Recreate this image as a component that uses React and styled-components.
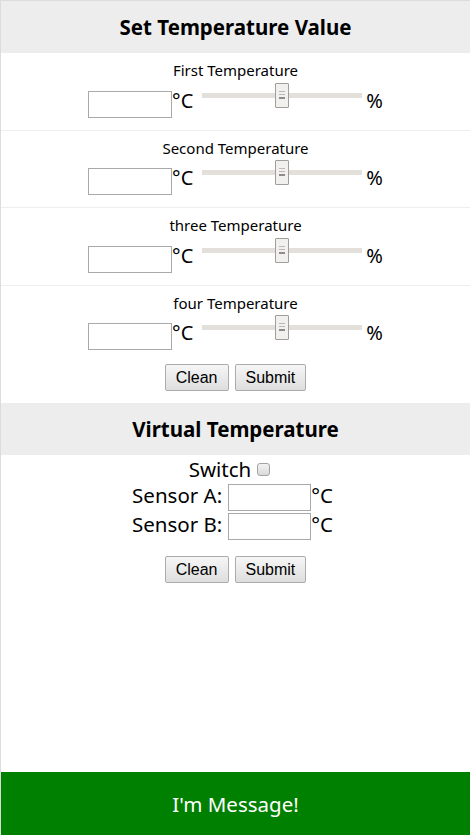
import React from 'react';
import styled, { createGlobalStyle } from 'styled-components';

const GlobalStyle = createGlobalStyle`
  html, body { margin: 0; padding: 0; background: #fff; }
  body { font-family: "Noto Sans", "Open Sans", sans-serif; color: #000; }
  *, *::before, *::after { box-sizing: border-box; }
`;

const Page = styled.div`
  min-height: 100vh;
  display: flex;
  flex-direction: column;
  border-left: 1px solid #dcdcdc;
  border-top: 1px solid #dcdcdc;
`;

const SectionHeader = styled.h2`
  margin: 0;
  height: 52px;
  display: flex;
  align-items: center;
  justify-content: center;
  background: #ededed;
  font-size: 20.5px;
  font-weight: 700;
`;

const TempRow = styled.div`
  display: flex;
  flex-direction: column;
  align-items: center;
  padding: 7px 0 12px;
  border-bottom: ${(p) => (p.$last ? 'none' : '1px solid #eeeeee')};
`;

const RowLabel = styled.div`
  font-size: 15px;
  line-height: 21.5px;
`;

const Controls = styled.div`
  display: flex;
  align-items: flex-start;
  height: 36px;
`;

const TextBox = styled.input`
  width: ${(p) => p.$w || 84}px;
  height: 27px;
  margin: ${(p) => p.$mt || 0}px 0 0;
  padding: 2px 3px;
  border: 1px solid #a9a9a9;
  border-radius: 0;
  background: #fff;
  font: 13px "Noto Sans", sans-serif;
  outline: none;
`;

const Unit = styled.span`
  font-size: 20px;
  line-height: 24px;
  margin-top: 7px;
  margin-left: ${(p) => p.$ml || 0}px;
`;

const Slider = styled.input`
  -webkit-appearance: none;
  appearance: none;
  width: 160px;
  height: 25px;
  margin: 1px 0 0 9px;
  padding: 0;
  background: transparent;

  &::-webkit-slider-runnable-track {
    height: 5px;
    background: #e3dfda;
    border: none;
  }
  &::-webkit-slider-thumb {
    -webkit-appearance: none;
    box-sizing: border-box;
    width: 14px;
    height: 25px;
    margin-top: -10px;
    border: 1px solid #a19d99;
    border-radius: 1px;
    background:
      linear-gradient(#bcb8b4, #bcb8b4) 3px 7px / 6px 1px no-repeat,
      linear-gradient(#bcb8b4, #bcb8b4) 3px 10px / 6px 1px no-repeat,
      linear-gradient(#8f8b87, #8f8b87) 3px 13px / 6px 2px no-repeat,
      #f1f0ee;
  }
`;

const ButtonBar = styled.div`
  display: flex;
  justify-content: center;
  gap: 6px;
  margin-top: ${(p) => p.$mt}px;
  padding-bottom: ${(p) => p.$pb || 0}px;
`;

const Button = styled.button`
  height: 27px;
  padding: 0 10px;
  border: 1px solid #acacac;
  border-radius: 2px;
  background: linear-gradient(#f6f6f6, #dedede);
  color: #000;
  font: 16px "Liberation Sans", Arial, sans-serif;
`;

const VirtualForm = styled.div`
  display: flex;
  flex-direction: column;
  align-items: center;
`;

const FormLine = styled.div`
  display: flex;
  align-items: center;
  justify-content: center;
  height: ${(p) => p.$h}px;
`;

const LineText = styled.span`
  font-size: 20.5px;
  line-height: 27px;
  margin-bottom: ${(p) => p.$mb || 0}px;
  margin-right: ${(p) => p.$mr || 0}px;
`;

const Check = styled.input`
  -webkit-appearance: none;
  appearance: none;
  width: 13px;
  height: 13px;
  margin: 0 12px 0 0;
  border: 1px solid #a3a3a3;
  border-radius: 3px;
  background: linear-gradient(#f3f3f3, #d9d9d9);
`;

const Footer = styled.div`
  margin-top: auto;
  height: 63px;
  display: flex;
  align-items: center;
  justify-content: center;
  background: #008000;
  color: #fff;
  font-size: 20.5px;
`;

const rows = ['First Temperature', 'Second Temperature', 'three Temperature', 'four Temperature'];

export default function App() {
  return (
    <>
      <GlobalStyle />
      <Page>
        <SectionHeader>Set Temperature Value</SectionHeader>
        {rows.map((r, i) => (
          <TempRow key={r} $last={i === rows.length - 1}>
            <RowLabel>{r}</RowLabel>
            <Controls>
              <TextBox type="text" $mt={9} />
              <Unit>°C</Unit>
              <Slider type="range" min="0" max="100" defaultValue="50" />
              <Unit $ml={4}>%</Unit>
            </Controls>
          </TempRow>
        ))}
        <ButtonBar $mt={2} $pb={12}>
          <Button>Clean</Button>
          <Button>Submit</Button>
        </ButtonBar>
        <SectionHeader>Virtual Temperature</SectionHeader>
        <VirtualForm>
          <FormLine $h={28}>
            <LineText $mr={6}>Switch</LineText>
            <Check type="checkbox" />
          </FormLine>
          <FormLine $h={29}>
            <LineText $mb={4} $mr={6}>Sensor A:</LineText>
            <TextBox type="text" $w={83} />
            <LineText $mb={4} $mr={6}>°C</LineText>
          </FormLine>
          <FormLine $h={29}>
            <LineText $mb={4} $mr={6}>Sensor B:</LineText>
            <TextBox type="text" $w={83} />
            <LineText $mb={4} $mr={6}>°C</LineText>
          </FormLine>
        </VirtualForm>
        <ButtonBar $mt={15}>
          <Button>Clean</Button>
          <Button>Submit</Button>
        </ButtonBar>
        <Footer>I'm Message!</Footer>
      </Page>
    </>
  );
}
